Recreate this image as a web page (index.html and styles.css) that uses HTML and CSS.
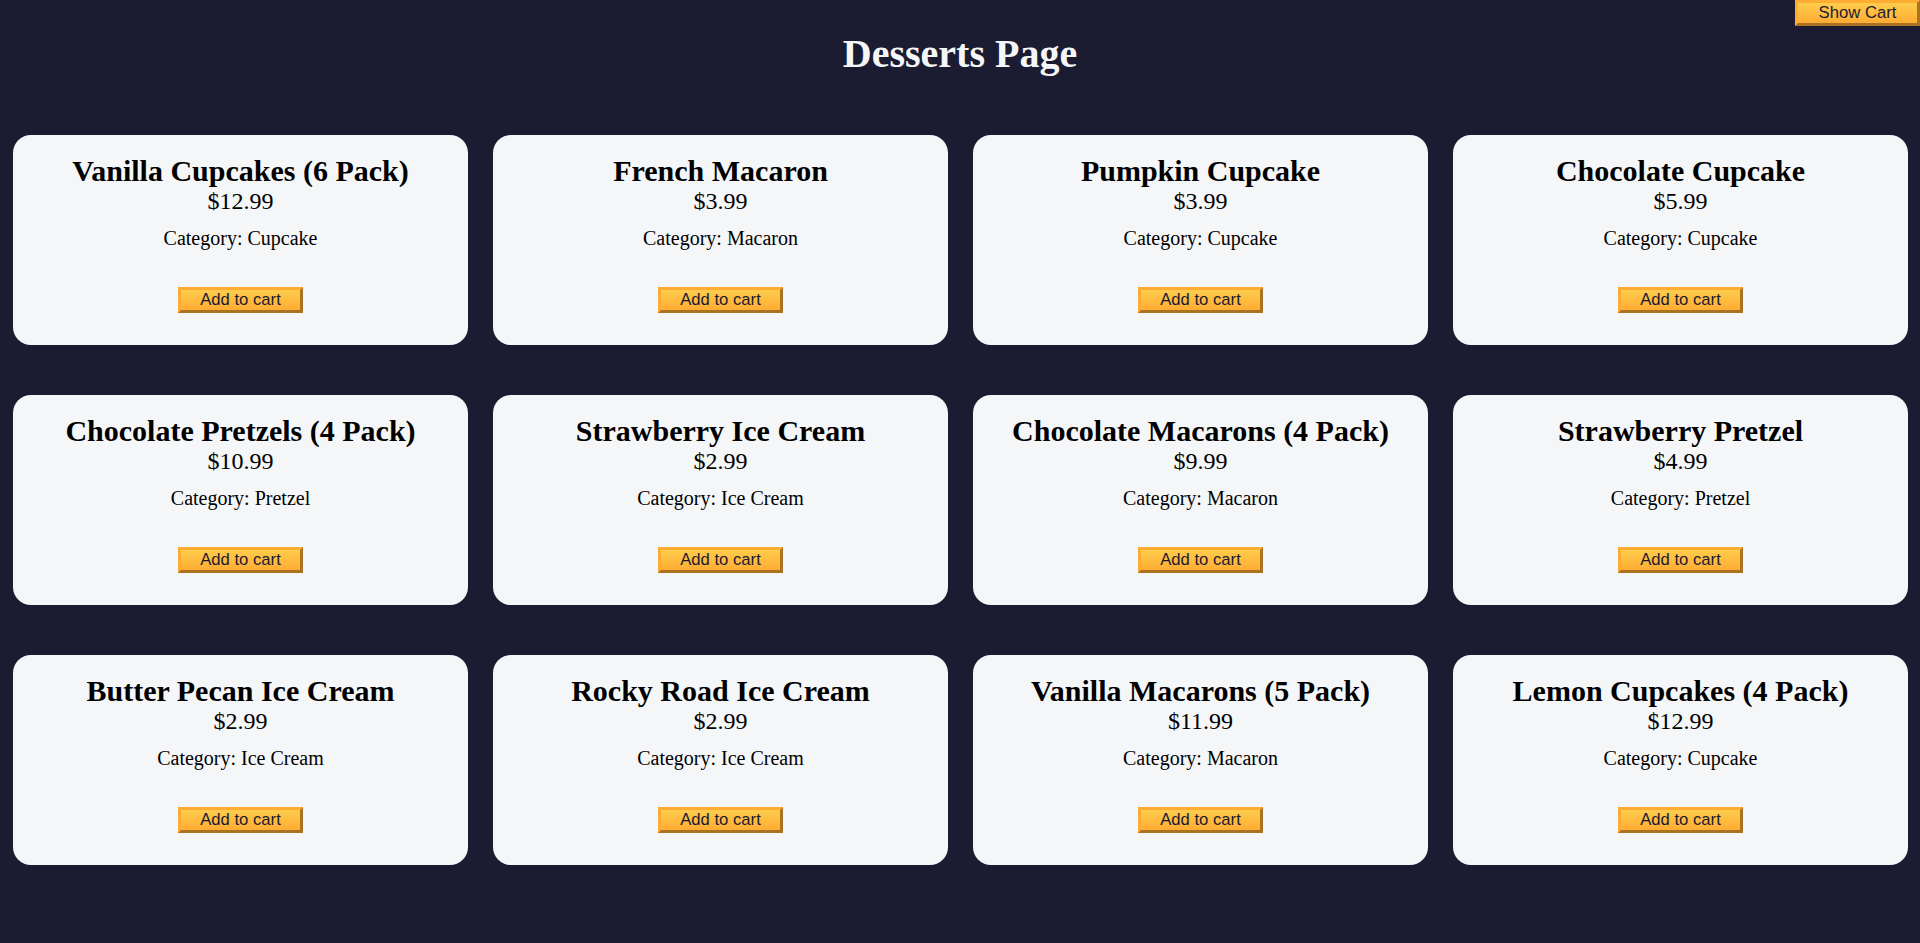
FILE: index.html
```html
<!DOCTYPE html>
<html lang="en">
<head>
<meta charset="UTF-8">
<title>Desserts Page</title>
<link rel="stylesheet" href="styles.css">
</head>
<body>
<header>
  <h1 class="title">Desserts Page</h1>
</header>
<main>
  <button id="cart-btn" type="button" class="btn cart-btn"><span id="show-hide-cart">Show</span> Cart</button>
  <div id="products-container" class="products">
    <div class="dessert-card">
      <h2 class="dessert-name">Vanilla Cupcakes (6 Pack)</h2>
      <p class="dessert-price">$12.99</p>
      <p class="product-category">Category: Cupcake</p>
      <button class="btn add-to-cart-btn">Add to cart</button>
    </div>
    <div class="dessert-card">
      <h2 class="dessert-name">French Macaron</h2>
      <p class="dessert-price">$3.99</p>
      <p class="product-category">Category: Macaron</p>
      <button class="btn add-to-cart-btn">Add to cart</button>
    </div>
    <div class="dessert-card">
      <h2 class="dessert-name">Pumpkin Cupcake</h2>
      <p class="dessert-price">$3.99</p>
      <p class="product-category">Category: Cupcake</p>
      <button class="btn add-to-cart-btn">Add to cart</button>
    </div>
    <div class="dessert-card">
      <h2 class="dessert-name">Chocolate Cupcake</h2>
      <p class="dessert-price">$5.99</p>
      <p class="product-category">Category: Cupcake</p>
      <button class="btn add-to-cart-btn">Add to cart</button>
    </div>
    <div class="dessert-card">
      <h2 class="dessert-name">Chocolate Pretzels (4 Pack)</h2>
      <p class="dessert-price">$10.99</p>
      <p class="product-category">Category: Pretzel</p>
      <button class="btn add-to-cart-btn">Add to cart</button>
    </div>
    <div class="dessert-card">
      <h2 class="dessert-name">Strawberry Ice Cream</h2>
      <p class="dessert-price">$2.99</p>
      <p class="product-category">Category: Ice Cream</p>
      <button class="btn add-to-cart-btn">Add to cart</button>
    </div>
    <div class="dessert-card">
      <h2 class="dessert-name">Chocolate Macarons (4 Pack)</h2>
      <p class="dessert-price">$9.99</p>
      <p class="product-category">Category: Macaron</p>
      <button class="btn add-to-cart-btn">Add to cart</button>
    </div>
    <div class="dessert-card">
      <h2 class="dessert-name">Strawberry Pretzel</h2>
      <p class="dessert-price">$4.99</p>
      <p class="product-category">Category: Pretzel</p>
      <button class="btn add-to-cart-btn">Add to cart</button>
    </div>
    <div class="dessert-card">
      <h2 class="dessert-name">Butter Pecan Ice Cream</h2>
      <p class="dessert-price">$2.99</p>
      <p class="product-category">Category: Ice Cream</p>
      <button class="btn add-to-cart-btn">Add to cart</button>
    </div>
    <div class="dessert-card">
      <h2 class="dessert-name">Rocky Road Ice Cream</h2>
      <p class="dessert-price">$2.99</p>
      <p class="product-category">Category: Ice Cream</p>
      <button class="btn add-to-cart-btn">Add to cart</button>
    </div>
    <div class="dessert-card">
      <h2 class="dessert-name">Vanilla Macarons (5 Pack)</h2>
      <p class="dessert-price">$11.99</p>
      <p class="product-category">Category: Macaron</p>
      <button class="btn add-to-cart-btn">Add to cart</button>
    </div>
    <div class="dessert-card">
      <h2 class="dessert-name">Lemon Cupcakes (4 Pack)</h2>
      <p class="dessert-price">$12.99</p>
      <p class="product-category">Category: Cupcake</p>
      <button class="btn add-to-cart-btn">Add to cart</button>
    </div>
  </div>
</main>
</body>
</html>
```

FILE: styles.css
```css
*,
*::before,
*::after {
  margin: 0;
  padding: 0;
  box-sizing: border-box;
}

body {
  background-color: #1b1b32;
  font-family: "Liberation Serif", "Times New Roman", serif;
  font-size: 20px;
  color: #000;
  min-height: 100vh;
}

.title {
  color: #f5f6f7;
  text-align: center;
  font-size: 40px;
  font-weight: bold;
  line-height: 44px;
  margin: 32px 0 34px;
}

.products {
  display: grid;
  grid-template-columns: repeat(4, 1fr);
  gap: 50px 25px;
  padding: 25px 12px 0 13px;
}

.dessert-card {
  background-color: #f5f6f7;
  border-radius: 18px;
  padding: 18.5px 20px 20px;
  text-align: center;
}

.dessert-name {
  font-size: 30px;
  font-weight: bold;
  line-height: 33px;
}

.dessert-price {
  font-size: 24px;
  line-height: 28px;
}

.product-category {
  font-size: 20px;
  line-height: 22px;
  margin-top: 12.5px;
}

.btn {
  display: block;
  cursor: pointer;
  width: 125px;
  height: 26px;
  padding: 0;
  font-family: "Liberation Sans", Arial, sans-serif;
  font-size: 16.67px;
  line-height: normal;
  color: #1b1b32;
  background-color: #feac32;
  background-image: linear-gradient(#fecc4c, #ffac33);
  border: 3px outset #feac32;
}

.add-to-cart-btn {
  margin: 37.5px auto 12.5px;
}

.cart-btn {
  position: absolute;
  top: 0;
  right: 0;
}
```
